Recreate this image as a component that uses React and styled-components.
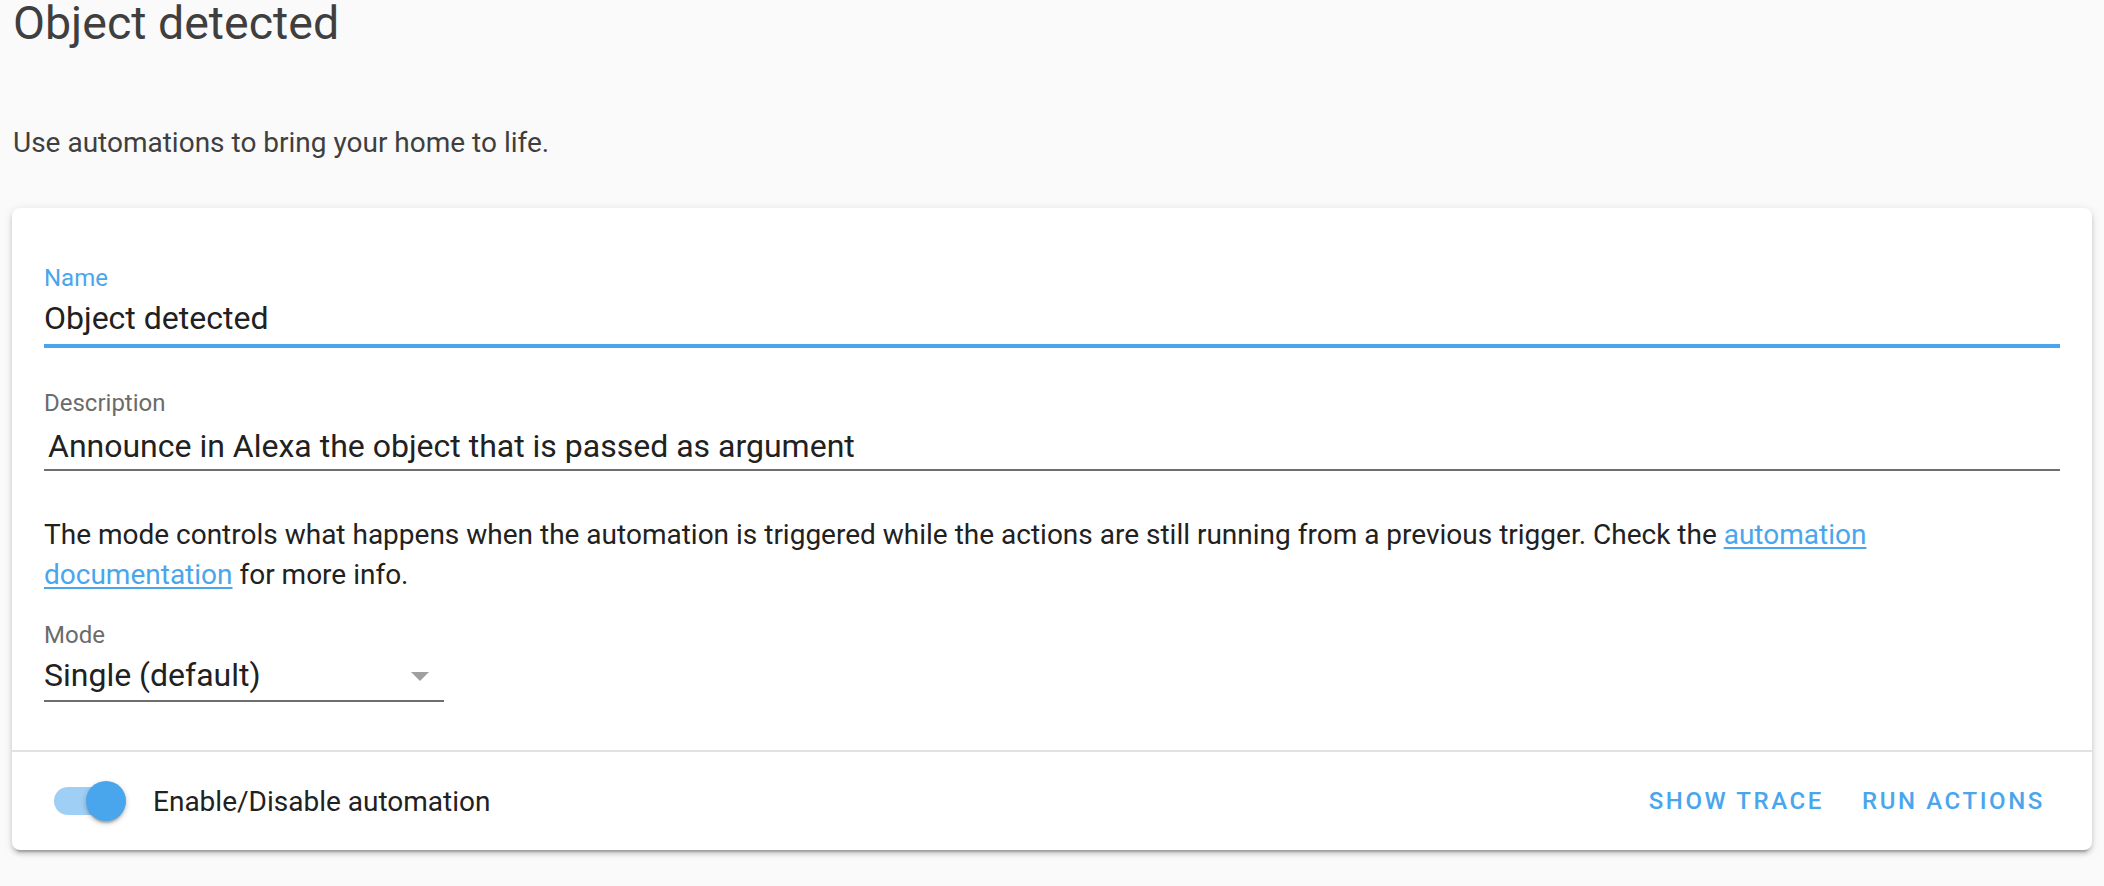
import styled, { createGlobalStyle } from 'styled-components';

const GlobalStyle = createGlobalStyle`
    html, body {
        margin: 0;
        padding: 0;
        background: #fafafa;
    }
    body {
        font-family: Roboto, "Liberation Sans", sans-serif;
        -webkit-font-smoothing: antialiased;
    }
`;

const blue = '#4aa6ec';

const Page = styled.div`
    padding: 1px 12px 34px;
    box-sizing: border-box;
    min-height: 886px;
`;

const Title = styled.h1`
    margin: 0;
    font-size: 46.5px;
    line-height: 45px;
    font-weight: 400;
    color: #3f3f3f;
    padding-left: 1px;
`;

const Intro = styled.p`
    margin: 77px 0 0;
    font-size: 28px;
    line-height: 40px;
    color: #3f3f3f;
    padding-left: 1px;
`;

const Card = styled.div`
    margin-top: 45px;
    background: #fff;
    border-radius: 8px;
    box-shadow: 0 4px 4px 0 rgba(0, 0, 0, 0.14), 0 2px 10px 0 rgba(0, 0, 0, 0.12), 0 6px 2px -4px rgba(0, 0, 0, 0.2);
`;

const CardContent = styled.div`
    padding: 54px 32px 48px;
    display: flex;
    flex-direction: column;
`;

const Field = styled.div`
    display: flex;
    flex-direction: column;
    width: ${p => p.$width || '100%'};
    margin-top: ${p => p.$top || 0}px;
    border-bottom: ${p => (p.$focused ? `4px solid ${blue}` : '2px solid #6e6e6e')};
    padding-bottom: ${p => p.$pad || 5}px;
    position: relative;
`;

const FieldLabel = styled.label`
    font-size: 24px;
    line-height: 32px;
    color: ${p => (p.$focused ? blue : '#6b6b6b')};
`;

const FieldValue = styled.div`
    margin-top: ${p => p.$gap || 4}px;
    padding-left: ${p => p.$indent || 0}px;
    font-size: 32px;
    line-height: 40px;
    color: #212121;
`;

const HelpText = styled.p`
    margin: 44px 0 0;
    font-size: 28px;
    line-height: 40px;
    color: #212121;
`;

const Link = styled.a`
    color: ${blue};
    text-decoration: underline;
    text-underline-offset: 3px;
`;

const Arrow = styled.span`
    position: absolute;
    right: 15px;
    bottom: 19px;
    width: 0;
    height: 0;
    border-left: 9px solid transparent;
    border-right: 9px solid transparent;
    border-top: 9px solid #a0a0a0;
`;

const Footer = styled.div`
    border-top: 2px solid #e2e2e2;
    height: 98px;
    display: flex;
    align-items: center;
    padding: 0 31px 0 42px;
`;

const Switch = styled.div`
    position: relative;
    width: 72px;
    height: 28px;
    border-radius: 14px;
    background: #9fcff5;
    flex-shrink: 0;
`;

const Thumb = styled.div`
    position: absolute;
    right: 0;
    top: -6px;
    width: 40px;
    height: 40px;
    border-radius: 50%;
    background: ${blue};
    box-shadow: 0 4px 2px -2px rgba(0, 0, 0, 0.2), 0 2px 4px 0 rgba(0, 0, 0, 0.14), 0 2px 6px 0 rgba(0, 0, 0, 0.12);
`;

const SwitchLabel = styled.span`
    margin-left: 27px;
    font-size: 28px;
    color: #212121;
`;

const Actions = styled.div`
    margin-left: auto;
    display: flex;
    gap: 6px;
`;

const TextButton = styled.button`
    background: none;
    border: 0;
    padding: 0 16px;
    height: 72px;
    font-family: Roboto, "Liberation Sans", sans-serif;
    font-size: 24px;
    font-weight: 500;
    letter-spacing: 2.6px;
    text-transform: uppercase;
    color: ${blue};
    cursor: pointer;
`;

const App = () => {
    return (
        <Page>
            <GlobalStyle />
            <Title>Object detected</Title>
            <Intro>Use automations to bring your home to life.</Intro>
            <Card>
                <CardContent>
                    <Field $focused $pad={6}>
                        <FieldLabel $focused>Name</FieldLabel>
                        <FieldValue>Object detected</FieldValue>
                    </Field>
                    <Field $top={39} $pad={3}>
                        <FieldLabel>Description</FieldLabel>
                        <FieldValue $gap={7} $indent={4}>Announce in Alexa the object that is passed as argument</FieldValue>
                    </Field>
                    <HelpText>
                        The mode controls what happens when the automation is triggered while the actions are still running from a previous trigger. Check the{' '}
                        <Link href="#">automation documentation</Link> for more info.
                    </HelpText>
                    <Field $top={24} $width="400px" $pad={5}>
                        <FieldLabel>Mode</FieldLabel>
                        <FieldValue>Single (default)</FieldValue>
                        <Arrow />
                    </Field>
                </CardContent>
                <Footer>
                    <Switch>
                        <Thumb />
                    </Switch>
                    <SwitchLabel>Enable/Disable automation</SwitchLabel>
                    <Actions>
                        <TextButton>Show trace</TextButton>
                        <TextButton>Run actions</TextButton>
                    </Actions>
                </Footer>
            </Card>
        </Page>
    );
};

export default App;
